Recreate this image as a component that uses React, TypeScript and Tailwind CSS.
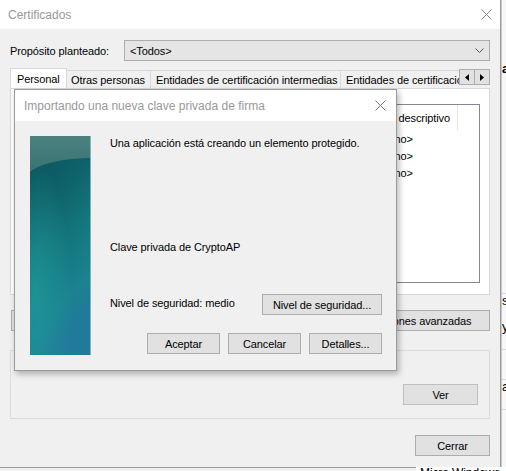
import React from "react";

const btn =
  "h-[21px] border border-[#adadad] bg-[#e1e1e1] flex items-center justify-center whitespace-nowrap text-black";

function CloseX({ color = "#6b6b6b" }: { color?: string }) {
  return (
    <svg width="11" height="11" viewBox="0 0 11 11">
      <path d="M0.5 0.5 L10.5 10.5 M10.5 0.5 L0.5 10.5" stroke={color} strokeWidth="1" fill="none" />
    </svg>
  );
}

function SideArt() {
  return (
    <svg width="61" height="219" viewBox="0 0 61 219" className="block">
      <defs>
        <linearGradient id="g1" x1="0" y1="0" x2="0.3" y2="1">
          <stop offset="0" stopColor="#0a5058" />
          <stop offset="0.35" stopColor="#0f6169" />
          <stop offset="0.62" stopColor="#14777e" />
          <stop offset="0.85" stopColor="#1b8290" />
          <stop offset="1" stopColor="#217a9a" />
        </linearGradient>
        <linearGradient id="g2" x1="0" y1="0" x2="0" y2="1">
          <stop offset="0" stopColor="#4a8280" />
          <stop offset="1" stopColor="#3a7272" />
        </linearGradient>
        <radialGradient id="g3" cx="0.1" cy="0.72" r="0.6">
          <stop offset="0" stopColor="#1f9a9c" stopOpacity="0.75" />
          <stop offset="1" stopColor="#1f9a9c" stopOpacity="0" />
        </radialGradient>
      </defs>
      <rect width="61" height="219" fill="url(#g1)" />
      <rect width="61" height="219" fill="url(#g3)" />
      <path d="M0 0 H61 V22 C40 22 12 26 0 36 Z" fill="url(#g2)" />
      <rect x="60" width="1" height="219" fill="#a9c9cc" opacity="0.7" />
    </svg>
  );
}

function Tri({ dir }: { dir: "l" | "r" }) {
  return (
    <svg width="4" height="7" viewBox="0 0 4 7">
      <path d={dir === "l" ? "M4 0 L0 3.5 L4 7 Z" : "M0 0 L4 3.5 L0 7 Z"} fill="#000" />
    </svg>
  );
}

export default function App() {
  return (
    <div className="w-[506px] h-[471px] overflow-hidden bg-[#f0f0f0] font-['Liberation_Sans',Arial,sans-serif] text-[11px] tracking-[-0.1px] leading-[14px] text-black relative">
      <div className="flex">
        {/* Main window */}
        <div className="w-[501px] h-[468px] shrink-0 flex flex-col border-r border-b border-[#9a9a9a] bg-[#f0f0f0]">
          {/* Title bar */}
          <div className="h-[29px] bg-white flex items-center justify-between pl-[8px] pr-[8px]">
            <span className="text-[#999999] text-[12px] tracking-normal">Certificados</span>
            <CloseX color="#8a8a8a" />
          </div>

          <div className="px-[10px] flex flex-col whitespace-nowrap">
            {/* Purpose row */}
            <div className="mt-[11px] flex items-center h-[21px]">
              <div className="w-[114px]">Propósito planteado:</div>
              <div className="flex-1 h-[21px] border border-[#adadad] bg-[#e5e5e5] flex items-center justify-between pl-[5px] pr-[5px]">
                <span>&lt;Todos&gt;</span>
                <svg width="9" height="5" viewBox="0 0 9 5">
                  <path d="M0.5 0.5 L4.5 4.5 L8.5 0.5" stroke="#555" fill="none" />
                </svg>
              </div>
            </div>

            {/* Tabs */}
            <div className="mt-[6px] h-[21px] flex items-end">
              <div className="w-[57px] h-[20px] bg-white border border-b-0 border-[#d9d9d9] flex items-center pl-[6px]">
                Personal
              </div>
              <div className="w-[84px] h-[18px] border-t border-r border-[#d9d9d9] flex items-center pl-[4px] overflow-hidden">
                Otras personas
              </div>
              <div className="w-[190px] h-[18px] border-t border-r border-[#d9d9d9] flex items-center pl-[5px] overflow-hidden">
                Entidades de certificación intermedias
              </div>
              <div className="w-[118px] h-[18px] border-t border-[#d9d9d9] flex items-center pl-[5px] overflow-hidden">
                Entidades de certificación raíz de confianza
              </div>
              <div className="self-start mt-[2px] flex">
                <div className="w-[16px] h-[16px] border border-[#adadad] bg-[#e1e1e1] flex items-center justify-center">
                  <Tri dir="l" />
                </div>
                <div className="w-[15px] h-[16px] border border-l-0 border-[#adadad] bg-[#e1e1e1] flex items-center justify-center">
                  <Tri dir="r" />
                </div>
              </div>
            </div>

            {/* Tab panel */}
            <div className="h-[207px] bg-white border border-[#d9d9d9] pt-[15px] pl-[7px] pr-[9px] pb-[11px]">
              <div className="h-full border border-[#828790] bg-white overflow-hidden">
                <div className="h-[25px] flex">
                  <div className="w-[165px] border-r border-[#e5e5e5] pl-[6px] flex items-center overflow-hidden">Emitido para</div>
                  <div className="w-[165px] border-r border-[#e5e5e5] pl-[6px] flex items-center overflow-hidden">Emitido por</div>
                  <div className="w-[109px] border-r border-[#e5e5e5] pl-[8px] flex items-center overflow-hidden">Nombre descriptivo</div>
                </div>
                {[0, 1, 2].map((i) => (
                  <div key={i} className="h-[17px] flex items-center pl-[341px]">
                    &lt;Ninguno&gt;
                  </div>
                ))}
              </div>
            </div>

            {/* Button row */}
            <div className="mt-[15px] flex justify-between">
              <div className={`${btn} w-[75px] ml-px`}>Importar...</div>
              <div className={`${btn} w-[138px]`}>Opciones avanzadas</div>
            </div>

            {/* Group box */}
            <div className="mt-[19px] h-[69px] border border-[#dcdcdc] flex flex-col items-end pt-[33px] pr-[11px]">
              <div className={`${btn} w-[75px] bg-[#cccccc] border-[#bfbfbf] text-[#8d8d8d]`}>Ver</div>
            </div>

            <div className="mt-[16px] flex justify-end">
              <div className={`${btn} w-[75px]`}>Cerrar</div>
            </div>
          </div>
        </div>

        {/* Background window sliver */}
        <div className="flex-1 h-[468px] bg-[#f7f7f7] border-l border-[#c8c8c8] flex flex-col overflow-hidden text-[13px] leading-none">
          <div className="h-[62px]" />
          <div className="h-[20px] font-bold">a</div>
          <div className="h-[212px] border-b border-[#dadada]" />
          <div className="h-[26px]">s</div>
          <div className="h-[30px] border-b border-[#dadada]">y</div>
          <div className="h-[30px] border-b border-[#dadada]" />
          <div className="h-[30px] border-b border-[#dadada]">a</div>
        </div>
      </div>
      <div className="flex h-[3px]">
        <div className="w-[416px]" />
        <div className="flex-1 bg-white text-[12px] leading-[12px] overflow-hidden pl-[4px] -mt-[1px] whitespace-nowrap">
          Micro Windows
        </div>
      </div>

      {/* Key import dialog */}
      <div className="absolute left-[14px] top-[89px] w-[383px] h-[282px] border border-[#9b9b9b] bg-[#f0f0f0] shadow-[2px_3px_6px_rgba(0,0,0,0.28)] flex flex-col whitespace-nowrap">
        <div className="h-[31px] bg-white flex items-center justify-between pl-[9px] pr-[10px]">
          <span className="text-[#999999] text-[12px] tracking-normal">Importando una nueva clave privada de firma</span>
          <CloseX color="#7a7a7a" />
        </div>
        <div className="flex pt-[15px] pl-[15px] pr-[14px]">
          <SideArt />
          <div className="flex-1 ml-[19px] flex flex-col">
            <div className="-mt-px leading-[16px]">Una aplicación está creando un elemento protegido.</div>
            <div className="mt-[88px] leading-[16px]">Clave privada de CryptoAP</div>
            <div className="mt-[39px] flex items-center justify-between">
              <span className="-mt-[3px]">Nivel de seguridad: medio</span>
              <div className={`${btn} w-[120px]`}>Nivel de seguridad...</div>
            </div>
            <div className="mt-[18px] flex justify-end gap-[8px]">
              <div className={`${btn} w-[73px]`}>Aceptar</div>
              <div className={`${btn} w-[73px]`}>Cancelar</div>
              <div className={`${btn} w-[73px]`}>Detalles...</div>
            </div>
          </div>
        </div>
      </div>
    </div>
  );
}
